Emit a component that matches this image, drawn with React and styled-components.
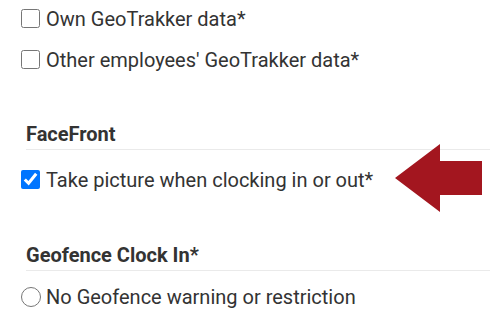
import React from "react";
import styled, { createGlobalStyle } from "styled-components";

const Global = createGlobalStyle`
  html, body { margin: 0; padding: 0; background: #fff; }
  body { font-family: Roboto, "Liberation Sans", Arial, sans-serif; color: #333; }
`;

const Page = styled.div`
  position: relative;
  width: 490px;
  height: 311px;
  overflow: hidden;
  padding-left: 21px;
  box-sizing: border-box;
`;

const List = styled.div`
  display: flex;
  flex-direction: column;
  gap: 4px;
`;

const Row = styled.label`
  display: flex;
  align-items: center;
  height: 37px;
  font-size: 20px;
  color: #333;
  margin-top: ${(p) => p.$mt || 0}px;
`;

const Box = styled.input`
  width: 19px;
  height: 19px;
  margin: 0 6px 0 0;
  flex: none;
`;

const Radio = styled.input`
  width: 20px;
  height: 20px;
  margin: 0 5px 0 0;
  flex: none;
`;

const Heading = styled.h3`
  margin: ${(p) => p.$mt}px 0 0 5px;
  padding: 0 0 3px 0;
  font-size: 20px;
  line-height: 24px;
  font-weight: 700;
  color: #333;
  border-bottom: 1px solid #eaeaea;
`;

const Arrow = styled.svg`
  position: absolute;
  left: 394px;
  top: 143px;
`;

export default function App() {
  return (
    <Page>
      <Global />
      <List>
        <Row>
          <Box type="checkbox" />
          Own GeoTrakker data*
        </Row>
        <Row>
          <Box type="checkbox" />
          Other employees' GeoTrakker data*
        </Row>
      </List>
      <Heading $mt={44}>FaceFront</Heading>
      <Row $mt={11}>
        <Box type="checkbox" defaultChecked />
        Take picture when clocking in or out*
      </Row>
      <Heading $mt={45}>Geofence Clock In*</Heading>
      <Row $mt={7}>
        <Radio type="radio" name="geo" />
        No Geofence warning or restriction
      </Row>
      <Arrow width="90" height="72" viewBox="0 0 90 72">
        <polygon points="1,35 46,1 46,18 88,18 88,52 46,52 46,69" fill="#a3161f" />
      </Arrow>
    </Page>
  );
}
